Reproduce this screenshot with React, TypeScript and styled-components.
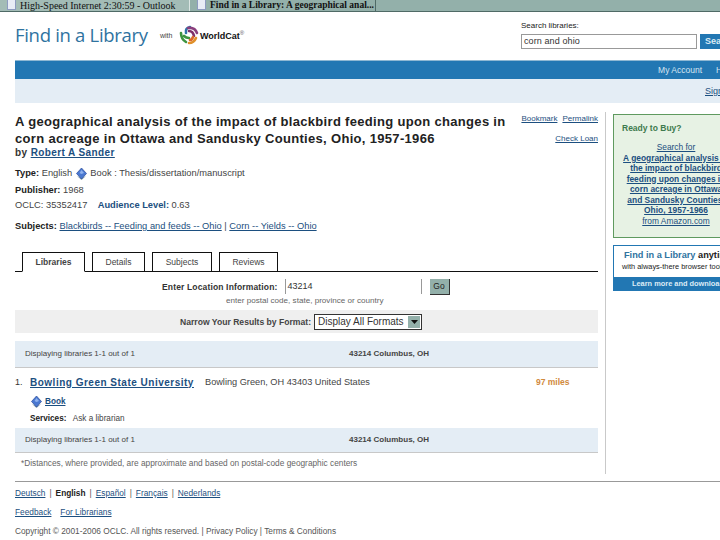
import React from 'react';
import styled, { createGlobalStyle } from 'styled-components';

const GlobalStyle = createGlobalStyle`
  html, body {
    margin: 0;
    padding: 0;
    background: #fff;
    overflow: hidden;
  }
  body {
    font-family: "Liberation Sans", Arial, sans-serif;
    font-size: 9px;
    color: #333;
  }
  a {
    color: #1c4f80;
    text-decoration: underline;
  }
`;

const Page = styled.div`
  width: 720px;
  height: 540px;
  overflow: hidden;
`;

const TaskBar = styled.div`
  display: flex;
  height: 11px;
  background: #93b0aa;
  border-bottom: 1px solid #4f6a66;
  overflow: hidden;
`;

const TaskTab = styled.div<{ $width: number; $active?: boolean }>`
  display: flex;
  align-items: center;
  gap: 4px;
  width: ${(p) => p.$width}px;
  height: 11px;
  padding-left: 7px;
  box-sizing: border-box;
  background: ${(p) => (p.$active ? 'transparent' : '#a3bcb6')};
  border-right: 1px solid ${(p) => (p.$active ? '#4f6a66' : '#dbe6e3')};
  font-family: "Liberation Serif", serif;
  font-size: ${(p) => (p.$active ? '9.5px' : '10px')};
  font-weight: ${(p) => (p.$active ? 'bold' : 'normal')};
  line-height: 7px;
  color: #111;
  white-space: nowrap;
  overflow: hidden;
`;

const TabIcon = styled.span`
  flex: none;
  width: 7px;
  height: 9px;
  margin-top: -2px;
  background: #e8ecf6;
  border: 1px solid #8d9bc0;
`;

const Header = styled.header`
  display: flex;
  justify-content: space-between;
  height: 48px;
  padding-left: 15px;
`;

const Brand = styled.div`
  display: flex;
  align-items: center;
  height: 20px;
  padding-top: 13px;
`;

const BrandTitle = styled.div`
  font-family: "Open Sans", sans-serif;
  font-size: 18.5px;
  line-height: 22px;
  width: 145px;
  color: #2f739f;
  letter-spacing: -0.3px;
  white-space: nowrap;
`;

const BrandWith = styled.span`
  width: 19px;
  font-size: 7px;
  color: #444;
`;

const BrandName = styled.span`
  margin-left: 1px;
  font-size: 9px;
  font-weight: bold;
  color: #111;
  sup {
    font-size: 6px;
    font-weight: normal;
    color: #555;
  }
`;

const SearchBox = styled.form`
  width: 199px;
  padding-top: 9px;
`;

const SearchLabel = styled.div`
  font-size: 8px;
  line-height: 10px;
  margin-bottom: 3px;
  color: #222;
`;

const SearchRow = styled.div`
  display: flex;
  gap: 3px;
`;

const SearchInput = styled.div`
  flex: none;
  width: 172px;
  height: 13px;
  padding-left: 2px;
  border: 1px solid #999;
  font-size: 9px;
  line-height: 13px;
  letter-spacing: 0.1px;
  color: #333;
`;

const SearchButton = styled.div`
  flex: none;
  width: 40px;
  height: 15px;
  padding-left: 5px;
  background: #2277b3;
  color: #dcebf5;
  font-size: 9px;
  font-weight: bold;
  line-height: 15px;
`;

const NavBar = styled.nav`
  display: flex;
  justify-content: flex-end;
  gap: 14px;
  height: 18px;
  margin-left: 15px;
  border-top: 1px solid #8fb8d3;
  background: #2277b3;
  color: #d5e5f1;
  font-size: 8.5px;
  line-height: 19px;
  white-space: nowrap;
`;

const NavClip = styled.span`
  width: 4px;
  overflow: hidden;
`;

const SubBar = styled.div`
  display: flex;
  justify-content: flex-end;
  height: 24px;
  margin-left: 15px;
  background: #e4edf5;
  font-size: 9px;
  line-height: 24px;
`;

const SubClip = styled.a`
  width: 15px;
  overflow: hidden;
`;

const Columns = styled.div`
  display: flex;
  padding-left: 15px;
`;

const Main = styled.main`
  flex: none;
  width: 583px;
  padding-top: 10px;
`;

const Side = styled.aside`
  flex: none;
  width: 120px;
  margin: 9px 0 0 7px;
  padding: 2px 0 0 7px;
  height: 360px;
  border-left: 1px solid #c9c9c9;
`;

const TitleRow = styled.div`
  display: flex;
  justify-content: space-between;
  height: 34px;
`;

const Title = styled.h1`
  margin: 0;
  width: 495px;
  font-size: 13px;
  line-height: 17px;
  letter-spacing: 0.32px;
  color: #222;
  white-space: nowrap;
`;

const TitleTools = styled.div`
  text-align: right;
  font-size: 8px;
  line-height: 11px;
  a + a {
    margin-left: 5px;
  }
  div + div {
    margin-top: 9px;
  }
`;

const Byline = styled.div`
  font-size: 10px;
  font-weight: bold;
  line-height: 12px;
  letter-spacing: 0.4px;
  color: #333;
`;

const MetaRow = styled.div<{ $top: number }>`
  display: flex;
  align-items: center;
  margin-top: ${(p) => p.$top}px;
  height: 11px;
  font-size: 9.3px;
  line-height: 11px;
  color: #444;
  white-space: nowrap;
`;

const Strong = styled.b<{ $blue?: boolean }>`
  color: ${(p) => (p.$blue ? '#1c4f80' : '#222')};
`;

const Tabs = styled.div`
  display: flex;
  align-items: flex-end;
  gap: 7px;
  height: 21px;
  margin-top: 18px;
  padding-left: 7px;
  border-bottom: 1px solid #111;
`;

const Tab = styled.div<{ $active?: boolean; $width: number }>`
  width: ${(p) => p.$width}px;
  box-sizing: border-box;
  margin-bottom: ${(p) => (p.$active ? '-1px' : '0')};
  height: ${(p) => (p.$active ? '20px' : '19px')};
  border: 1px solid #111;
  border-bottom: ${(p) => (p.$active ? '1px solid #fff' : 'none')};
  font-size: 8.5px;
  font-weight: ${(p) => (p.$active ? 'bold' : 'normal')};
  line-height: 18px;
  text-align: center;
  color: #444;
`;

const LocationRow = styled.div`
  display: flex;
  align-items: center;
  height: 17px;
  margin-top: 6px;
  padding-left: 147px;
  font-size: 8.5px;
  white-space: nowrap;
`;

const LocationLabel = styled.b`
  color: #333;
  letter-spacing: 0.15px;
`;

const LocationInput = styled.div`
  width: 137px;
  height: 15px;
  margin-left: 7px;
  padding-left: 2px;
  box-sizing: border-box;
  border-left: 1px solid #999;
  border-right: 1px solid #999;
  line-height: 15px;
  font-size: 9px;
  color: #333;
`;

const GoButton = styled.div`
  width: 19px;
  height: 15px;
  margin-left: 8px;
  background: #93b0aa;
  border-right: 1px solid #333;
  border-bottom: 1px solid #333;
  font-size: 8.5px;
  line-height: 15px;
  text-align: center;
  color: #222;
`;

const Hint = styled.div`
  height: 10px;
  margin-top: 1px;
  padding-left: 211px;
  font-size: 8.1px;
  line-height: 10px;
  color: #666;
  white-space: nowrap;
`;

const FormatRow = styled.div`
  display: flex;
  align-items: center;
  height: 23px;
  margin-top: 4px;
  padding-left: 165px;
  background: #efefef;
  font-size: 8.6px;
  font-weight: bold;
  color: #444;
  white-space: nowrap;
`;

const FormatSelect = styled.div`
  display: flex;
  align-items: center;
  justify-content: space-between;
  width: 108px;
  height: 16px;
  margin-left: 3px;
  padding: 0 1px 0 3px;
  box-sizing: border-box;
  background: #fff;
  border: 1px solid #333;
  font-size: 10px;
  font-weight: normal;
  color: #333;
`;

const SelectArrow = styled.span`
  display: flex;
  align-items: center;
  justify-content: center;
  width: 12px;
  height: 12px;
  background: #93b0aa;
`;

const ResultBar = styled.div<{ $top: number; $height: number }>`
  display: flex;
  align-items: center;
  height: ${(p) => p.$height}px;
  margin-top: ${(p) => p.$top}px;
  padding-left: 10px;
  padding-bottom: 2px;
  background: #e4edf5;
  border-bottom: 1px solid #c8c8c8;
  background-clip: padding-box;
  font-size: 8px;
  color: #444;
  white-space: nowrap;
`;

const ResultCount = styled.span`
  width: 324px;
`;

const ResultPlace = styled.b`
  font-size: 8px;
  color: #444;
`;

const LibraryRow = styled.div`
  display: flex;
  align-items: center;
  height: 18px;
  margin-top: 5px;
  white-space: nowrap;
`;

const Rank = styled.span`
  width: 15px;
  font-size: 9px;
`;

const LibraryName = styled.a`
  width: 175px;
  font-size: 10px;
  font-weight: bold;
  letter-spacing: 0.5px;
`;

const Address = styled.span`
  width: 331px;
  font-size: 9.2px;
  color: #444;
`;

const Miles = styled.b`
  font-size: 8.5px;
  color: #d18a3c;
`;

const Indented = styled.div<{ $top: number }>`
  display: flex;
  align-items: center;
  gap: 2px;
  margin: ${(p) => p.$top}px 0 0 15px;
  height: 11px;
  font-size: 8.2px;
  color: #444;
  white-space: nowrap;
`;

const Note = styled.div`
  margin: 5px 0 0 6px;
  font-size: 8.3px;
  line-height: 11px;
  color: #666;
  white-space: nowrap;
`;

const Footer = styled.footer`
  height: 60px;
  margin: 7px 0 0 15px;
  padding-top: 6px;
  border-top: 1px solid #999;
  font-size: 8.3px;
  color: #555;
`;

const FooterRow = styled.div<{ $top: number; $gap: number }>`
  display: flex;
  gap: ${(p) => p.$gap}px;
  height: 11px;
  line-height: 11px;
  margin-top: ${(p) => p.$top}px;
  white-space: nowrap;
`;

const BuyCard = styled.div`
  height: 124px;
  width: 130px;
  box-sizing: border-box;
  padding: 8px 0 0;
  background: #e7f2e4;
  border: 1px solid #5f9a5f;
  font-size: 8.4px;
  line-height: 10.5px;
  text-align: center;
  overflow: hidden;
  white-space: nowrap;
`;

const BuyTitle = styled.div`
  margin: 0 0 8px 8px;
  line-height: 11px;
  text-align: left;
  font-size: 8.5px;
  font-weight: bold;
  color: #3e7a4e;
`;

const BuyLink = styled.a`
  display: block;
  width: 110px;
  margin-left: 7px;
  font-weight: bold;
`;

const BuyPlain = styled.span`
  font-weight: normal;
`;

const PromoCard = styled.div`
  width: 130px;
  height: 46px;
  margin-top: 7px;
  box-sizing: border-box;
  border: 1px solid #2277b3;
  white-space: nowrap;
  overflow: hidden;
`;

const PromoTitle = styled.div`
  margin: 4px 0 0 10px;
  font-size: 9.2px;
  line-height: 11px;
  font-weight: bold;
  color: #2f739f;
  span {
    color: #222;
  }
`;

const PromoText = styled.div`
  margin: 1px 0 0 8px;
  font-size: 7.4px;
  line-height: 10px;
  color: #222;
`;

const PromoLink = styled.div`
  margin-top: 5px;
  height: 14px;
  padding-left: 18px;
  background: #2277b3;
  color: #dcebf5;
  font-size: 7.4px;
  font-weight: bold;
  line-height: 13px;
`;

const FormatIcon = () => (
  <svg width="13" height="14" viewBox="0 0 13 14">
    <path d="M2 9 L6.5 13 L11 9 L6.5 11 Z" fill="#7f9aa8" />
    <path d="M6.5 1 L11.5 6.5 L6.5 12 L1.5 6.5 Z" fill="#4a78d0" stroke="#2a4a9a" strokeWidth="0.7" />
    <path d="M6.5 3 L9 6 L6.5 7 L4.5 6 Z" fill="#8fb2ee" />
  </svg>
);

const WorldCatLogo = () => (
  <svg width="20" height="20" viewBox="0 0 20 20" fill="none" strokeWidth="2.6" strokeLinecap="round">
    <path d="M7 8 Q6 3 11 2" stroke="#2f73a8" />
    <path d="M9 3 Q16 2 18 8" stroke="#8a3f7d" />
    <path d="M10 6 Q14 6 15 11" stroke="#7d2f6a" />
    <path d="M2 8 Q2 14 7 17" stroke="#3d9440" />
    <path d="M5 11 Q7 13 10 13" stroke="#3d9440" />
    <path d="M10 18 Q15 18 17 13" stroke="#e0902a" />
    <path d="M11 15 Q13 15 14 12" stroke="#d9682a" />
  </svg>
);

const App = () => {
  return (
    <Page>
      <GlobalStyle />
      <TaskBar>
        <TaskTab $width={190}>
          <TabIcon />
          High-Speed Internet 2:30:59 - Outlook
        </TaskTab>
        <TaskTab $active $width={186}>
          <TabIcon />
          Find in a Library: A geographical anal...
        </TaskTab>
      </TaskBar>
      <Header>
        <Brand>
          <BrandTitle>Find in a Library</BrandTitle>
          <BrandWith>with</BrandWith>
          <WorldCatLogo />
          <BrandName>
            WorldCat<sup>®</sup>
          </BrandName>
        </Brand>
        <SearchBox>
          <SearchLabel>Search libraries:</SearchLabel>
          <SearchRow>
            <SearchInput>corn and ohio</SearchInput>
            <SearchButton>Search</SearchButton>
          </SearchRow>
        </SearchBox>
      </Header>
      <NavBar>
        <span>My Account</span>
        <NavClip>Help</NavClip>
      </NavBar>
      <SubBar>
        <SubClip href="#">Sign</SubClip>
      </SubBar>
      <Columns>
        <Main>
          <TitleRow>
            <Title>
              A geographical analysis of the impact of blackbird feeding upon changes in
              <br />
              corn acreage in Ottawa and Sandusky Counties, Ohio, 1957-1966
            </Title>
            <TitleTools>
              <div>
                <a href="#">Bookmark</a>
                <a href="#">Permalink</a>
              </div>
              <div>
                <a href="#">Check Loan</a>
              </div>
            </TitleTools>
          </TitleRow>
          <Byline>
            by <a href="#">Robert A Sander</a>
          </Byline>
          <MetaRow $top={9}>
            <Strong>Type:</Strong>&nbsp;English&nbsp;
            <FormatIcon />
            &nbsp;Book : Thesis/dissertation/manuscript
          </MetaRow>
          <MetaRow $top={6}>
            <Strong>Publisher:</Strong>&nbsp;1968
          </MetaRow>
          <MetaRow $top={4}>
            OCLC: 35352417&nbsp;&nbsp;&nbsp;&nbsp;
            <Strong $blue>Audience Level:</Strong>&nbsp;0.63
          </MetaRow>
          <MetaRow $top={10}>
            <Strong>Subjects:</Strong>&nbsp;
            <a href="#">Blackbirds -- Feeding and feeds -- Ohio</a>&nbsp;|&nbsp;
            <a href="#">Corn -- Yields -- Ohio</a>
          </MetaRow>
          <Tabs>
            <Tab $active $width={63}>Libraries</Tab>
            <Tab $width={53}>Details</Tab>
            <Tab $width={60}>Subjects</Tab>
            <Tab $width={59}>Reviews</Tab>
          </Tabs>
          <LocationRow>
            <LocationLabel>Enter Location Information:</LocationLabel>
            <LocationInput>43214</LocationInput>
            <GoButton>Go</GoButton>
          </LocationRow>
          <Hint>enter postal code, state, province or country</Hint>
          <FormatRow>
            Narrow Your Results by Format:
            <FormatSelect>
              Display All Formats
              <SelectArrow>
                <svg width="7" height="4" viewBox="0 0 7 4">
                  <path d="M0 0 H7 L3.5 4 Z" fill="#111" />
                </svg>
              </SelectArrow>
            </FormatSelect>
          </FormatRow>
          <ResultBar $top={8} $height={24}>
            <ResultCount>Displaying libraries 1-1 out of 1</ResultCount>
            <ResultPlace>43214 Columbus, OH</ResultPlace>
          </ResultBar>
          <LibraryRow>
            <Rank>1.</Rank>
            <LibraryName href="#">Bowling Green State University</LibraryName>
            <Address>Bowling Green, OH 43403 United States</Address>
            <Miles>97 miles</Miles>
          </LibraryRow>
          <Indented $top={5}>
            <FormatIcon />
            <a href="#"><b>Book</b></a>
          </Indented>
          <Indented $top={6}>
            <Strong>Services:</Strong>&nbsp;<span>Ask a librarian</span>
          </Indented>
          <ResultBar $top={4} $height={22}>
            <ResultCount>Displaying libraries 1-1 out of 1</ResultCount>
            <ResultPlace>43214 Columbus, OH</ResultPlace>
          </ResultBar>
          <Note>*Distances, where provided, are approximate and based on postal-code geographic centers</Note>
        </Main>
        <Side>
          <BuyCard>
            <BuyTitle>Ready to Buy?</BuyTitle>
            <BuyLink href="#">
              <BuyPlain>Search for</BuyPlain>
              <br />
              A geographical analysis of
              <br />
              the impact of blackbird
              <br />
              feeding upon changes in
              <br />
              corn acreage in Ottawa
              <br />
              and Sandusky Counties,
              <br />
              Ohio, 1957-1966
              <br />
              <BuyPlain>from Amazon.com</BuyPlain>
            </BuyLink>
          </BuyCard>
          <PromoCard>
            <PromoTitle>
              Find in a Library <span>anytime</span>
            </PromoTitle>
            <PromoText>with always-there browser tools</PromoText>
            <PromoLink>Learn more and download</PromoLink>
          </PromoCard>
        </Side>
      </Columns>
      <Footer>
        <FooterRow $top={0} $gap={4}>
          <a href="#">Deutsch</a> | <Strong>English</Strong> | <a href="#">Español</a> | <a href="#">Français</a> | <a href="#">Nederlands</a>
        </FooterRow>
        <FooterRow $top={8} $gap={1}>
          <a href="#">Feedback</a>&nbsp;&nbsp;&nbsp;<a href="#">For Librarians</a>
        </FooterRow>
        <FooterRow $top={8} $gap={4}>
          Copyright © 2001-2006 OCLC. All rights reserved. | Privacy Policy | Terms &amp; Conditions
        </FooterRow>
      </Footer>
    </Page>
  );
};

export default App;
